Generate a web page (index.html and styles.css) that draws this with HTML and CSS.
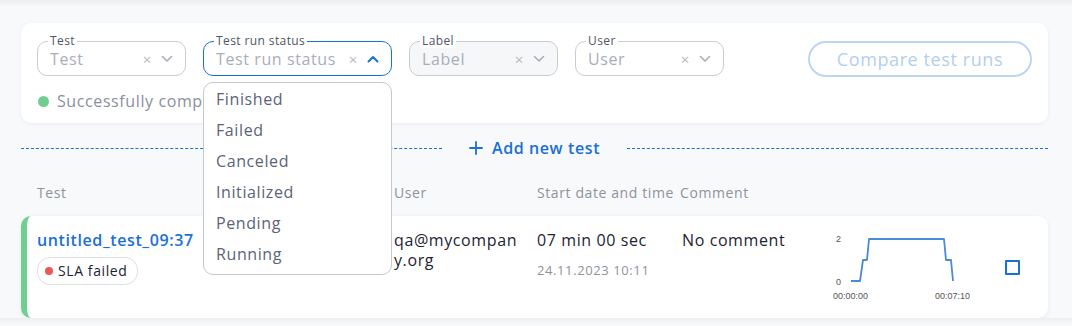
FILE: index.html
```html
<!DOCTYPE html>
<html>
<head>
    <title>Test runs</title>
    <link rel="stylesheet" href="styles.css">
</head>
<body>
    <div class="page">
        <div class="filter-card">
            <div class="filter-row">
                <div class="field">
                    <span class="field-label">Test</span>
                    <span class="placeholder">Test</span>
                    <span class="clear">&times;</span>
                    <svg class="chevron" width="12" height="8" viewBox="0 0 12 8"><path d="M1.5 1.5 6 6l4.5-4.5" fill="none" stroke="#a9aeb8" stroke-width="1.6" stroke-linecap="round" stroke-linejoin="round"/></svg>
                </div>
                <div class="field field-wide field-open">
                    <span class="field-label">Test run status</span>
                    <span class="placeholder">Test run status</span>
                    <span class="clear">&times;</span>
                    <svg class="chevron" width="12" height="8" viewBox="0 0 12 8"><path d="M1.5 6.5 6 2l4.5 4.5" fill="none" stroke="#1a6fd8" stroke-width="2" stroke-linecap="round" stroke-linejoin="round"/></svg>
                    <ul class="menu">
                        <li>Finished</li>
                        <li>Failed</li>
                        <li>Canceled</li>
                        <li>Initialized</li>
                        <li>Pending</li>
                        <li>Running</li>
                    </ul>
                </div>
                <div class="field field-disabled">
                    <span class="field-label">Label</span>
                    <span class="placeholder">Label</span>
                    <span class="clear">&times;</span>
                    <svg class="chevron" width="12" height="8" viewBox="0 0 12 8"><path d="M1.5 1.5 6 6l4.5-4.5" fill="none" stroke="#a9aeb8" stroke-width="1.6" stroke-linecap="round" stroke-linejoin="round"/></svg>
                </div>
                <div class="field">
                    <span class="field-label">User</span>
                    <span class="placeholder">User</span>
                    <span class="clear">&times;</span>
                    <svg class="chevron" width="12" height="8" viewBox="0 0 12 8"><path d="M1.5 1.5 6 6l4.5-4.5" fill="none" stroke="#a9aeb8" stroke-width="1.6" stroke-linecap="round" stroke-linejoin="round"/></svg>
                </div>
                <button class="compare-btn" disabled>Compare test runs</button>
            </div>
            <div class="status-line">
                <span class="dot dot-green"></span>
                <span>Successfully completed</span>
            </div>
        </div>

        <div class="add-test">
            <span class="dash"></span>
            <a class="add-link">
                <svg width="14" height="14" viewBox="0 0 14 14"><path d="M7 1v12M1 7h12" stroke="#1a6fd8" stroke-width="1.8" stroke-linecap="round"/></svg>
                Add new test
            </a>
            <span class="dash"></span>
        </div>

        <div class="table-head">
            <span>Test</span>
            <span></span>
            <span>User</span>
            <span>Start date and time</span>
            <span>Comment</span>
        </div>

        <div class="run-row">
            <div class="cell-test">
                <a class="test-name">untitled_test_09:37</a>
                <span class="badge"><span class="dot dot-red"></span>SLA failed</span>
            </div>
            <div></div>
            <div class="cell-user">qa@mycompany.org</div>
            <div class="cell-date">
                <div>07 min 00 sec</div>
                <div class="date-sub">24.11.2023 10:11</div>
            </div>
            <div class="cell-comment">No comment</div>
            <div class="cell-chart">
                <svg width="140" height="72" viewBox="0 0 140 72">
                    <text x="6" y="11" class="axis">2</text>
                    <text x="6" y="54" class="axis">0</text>
                    <polyline points="21,50 30,50 33,29 37,29 39,8 114,8 116,29 121,29 123,50" fill="none" stroke="#4a8ad8" stroke-width="1.8" stroke-linejoin="round"/>
                    <text x="3" y="68" class="axis">00:00:00</text>
                    <text x="105" y="68" class="axis">00:07:10</text>
                </svg>
            </div>
            <div class="cell-check"><span class="checkbox"></span></div>
        </div>
    </div>
</body>
</html>
```

FILE: styles.css
```css
body {
    margin: 0;
    font-family: "Open Sans", "Noto Sans", sans-serif;
    letter-spacing: 0.6px;
    background: linear-gradient(#eceef2, #f8f9fb 7px) #f8f9fb;
    color: #1d2332;
}
.page {
    padding: 23px 24px 0 21px;
}
.filter-card {
    background: #fff;
    border-radius: 10px;
    box-shadow: 0 1px 4px rgba(30, 40, 60, 0.06);
    padding: 18px 16px 11px 16px;
}
.filter-row {
    display: flex;
    align-items: flex-start;
    gap: 17px;
}
.field {
    position: relative;
    width: 149px;
    height: 35px;
    box-sizing: border-box;
    border: 1px solid #c8ccd4;
    border-radius: 10px;
    display: flex;
    align-items: center;
    padding: 0 12px;
    background: #fff;
}
.field-wide {
    width: 189px;
}
.field-open {
    border-color: #1a6fd8;
}
.field-disabled {
    background: #f6f7f9;
}
.field-label {
    position: absolute;
    top: -8px;
    left: 10px;
    padding: 0 2px;
    font-size: 12px;
    line-height: 14px;
    letter-spacing: 0.4px;
    color: #4f5665;
    background: #fff;
}
.placeholder {
    flex: 1;
    font-size: 16px;
    color: #a9aeb8;
    white-space: nowrap;
}
.clear {
    color: #b5bac3;
    font-size: 15px;
    margin-right: 9px;
}
.chevron {
    flex: none;
}
.menu {
    position: absolute;
    top: 40px;
    left: -1px;
    width: 189px;
    box-sizing: border-box;
    margin: 0;
    padding: 1px 0 4px;
    list-style: none;
    background: #fff;
    border: 1px solid #c4c8d0;
    border-radius: 10px;
    z-index: 5;
}
.menu li {
    height: 31px;
    line-height: 31px;
    padding-left: 12px;
    font-size: 16px;
    color: #5b6477;
}
.compare-btn {
    margin-left: auto;
    width: 224px;
    height: 36px;
    border: 2px solid #bcd6f2;
    border-radius: 18px;
    background: #fff;
    color: #b3cff0;
    font-family: inherit;
    font-size: 18px;
    letter-spacing: 0.6px;
}
.status-line {
    display: flex;
    align-items: center;
    gap: 8px;
    margin-top: 13px;
    padding-left: 1px;
    font-size: 16px;
    color: #8a909b;
}
.dot {
    display: inline-block;
    border-radius: 50%;
}
.dot-green {
    width: 11px;
    height: 11px;
    background: #6fcf8f;
}
.dot-red {
    width: 8px;
    height: 8px;
    background: #f25555;
    margin-right: 5px;
}
.add-test {
    display: flex;
    align-items: center;
    height: 28px;
    margin-top: 11px;
}
.dash {
    flex: 1;
    border-top: 1px dashed #1a6fd8;
}
.add-link {
    display: flex;
    align-items: center;
    gap: 9px;
    padding: 0 27px;
    color: #1a6fd8;
    font-size: 16px;
    font-weight: 600;
}
.table-head {
    display: grid;
    grid-template-columns: 166px 191px 143px 143px 150px;
    padding-left: 16px;
    margin-top: 21px;
    font-size: 14px;
    color: #8d939c;
    height: 20px;
    line-height: 20px;
}
.run-row {
    display: grid;
    grid-template-columns: 166px 191px 143px 143px 150px 175px 15px;
    height: 102px;
    box-sizing: border-box;
    margin-top: 13px;
    padding: 14px 28px 0 10px;
    background: #fff;
    border-left: 6px solid #6fcf8f;
    border-radius: 10px;
    box-shadow: 0 1px 4px rgba(30, 40, 60, 0.07);
    font-size: 16px;
    line-height: 20px;
}
.test-name {
    display: block;
    color: #1a6fd8;
    font-weight: 600;
}
.badge {
    display: inline-flex;
    align-items: center;
    margin-top: 7px;
    height: 26px;
    padding: 0 10px 0 7px;
    border: 1px solid #dcdfe4;
    border-radius: 13px;
    font-size: 14px;
    color: #1d2332;
}
.cell-user {
    width: 127px;
    word-break: break-all;
}
.date-sub {
    margin-top: 10px;
    font-size: 13px;
    color: #8d939c;
}
.cell-comment {
    padding-left: 2px;
}
.cell-chart {
    margin-top: 1px;
}
.axis {
    font-family: "Liberation Sans", sans-serif;
    font-size: 9px;
    letter-spacing: 0;
    fill: #555;
}
.cell-check {
    padding-top: 30px;
}
.checkbox {
    display: block;
    width: 15px;
    height: 15px;
    box-sizing: border-box;
    border: 2px solid #1a6fd8;
    border-radius: 1px;
}
```
